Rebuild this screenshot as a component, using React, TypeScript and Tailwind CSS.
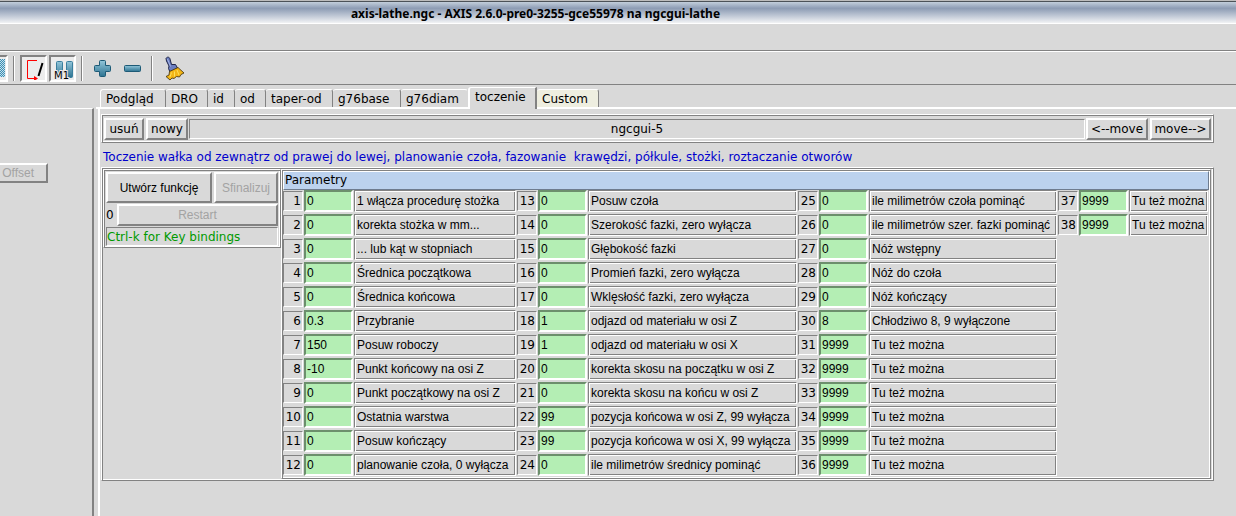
import React from 'react';
import { clsx } from 'clsx';

type Param = { id: number; value: string; label: string };

const columns: Param[][] = [
  [
    { id: 1, value: '0', label: '1 włącza procedurę stożka' },
    { id: 2, value: '0', label: 'korekta stożka w mm...' },
    { id: 3, value: '0', label: '... lub kąt w stopniach' },
    { id: 4, value: '0', label: 'Średnica początkowa' },
    { id: 5, value: '0', label: 'Średnica końcowa' },
    { id: 6, value: '0.3', label: 'Przybranie' },
    { id: 7, value: '150', label: 'Posuw roboczy' },
    { id: 8, value: '-10', label: 'Punkt końcowy na osi Z' },
    { id: 9, value: '0', label: 'Punkt początkowy na osi Z' },
    { id: 10, value: '0', label: 'Ostatnia warstwa' },
    { id: 11, value: '0', label: 'Posuw kończący' },
    { id: 12, value: '0', label: 'planowanie czoła, 0 wyłącza' },
  ],
  [
    { id: 13, value: '0', label: 'Posuw czoła' },
    { id: 14, value: '0', label: 'Szerokość fazki, zero wyłącza' },
    { id: 15, value: '0', label: 'Głębokość fazki' },
    { id: 16, value: '0', label: 'Promień fazki, zero wyłącza' },
    { id: 17, value: '0', label: 'Wklęsłość fazki, zero wyłącza' },
    { id: 18, value: '1', label: 'odjazd od materiału w osi Z' },
    { id: 19, value: '1', label: 'odjazd od materiału w osi X' },
    { id: 20, value: '0', label: 'korekta skosu na początku w osi Z' },
    { id: 21, value: '0', label: 'korekta skosu na końcu w osi Z' },
    { id: 22, value: '99', label: 'pozycja końcowa w osi Z, 99 wyłącza' },
    { id: 23, value: '99', label: 'pozycja końcowa w osi X, 99 wyłącza' },
    { id: 24, value: '0', label: 'ile milimetrów średnicy pominąć' },
  ],
  [
    { id: 25, value: '0', label: 'ile milimetrów czoła pominąć' },
    { id: 26, value: '0', label: 'ile milimetrów szer. fazki pominąć' },
    { id: 27, value: '0', label: 'Nóż wstępny' },
    { id: 28, value: '0', label: 'Nóż do czoła' },
    { id: 29, value: '0', label: 'Nóż kończący' },
    { id: 30, value: '8', label: 'Chłodziwo 8, 9 wyłączone' },
    { id: 31, value: '9999', label: 'Tu też można' },
    { id: 32, value: '9999', label: 'Tu też można' },
    { id: 33, value: '9999', label: 'Tu też można' },
    { id: 34, value: '9999', label: 'Tu też można' },
    { id: 35, value: '9999', label: 'Tu też można' },
    { id: 36, value: '9999', label: 'Tu też można' },
  ],
  [
    { id: 37, value: '9999', label: 'Tu też można' },
    { id: 38, value: '9999', label: 'Tu też można' },
  ],
];

const tabs = [
  { name: 'Podgląd', width: 'w-[66px]' },
  { name: 'DRO', width: 'w-[42px]' },
  { name: 'id', width: 'w-[27px]' },
  { name: 'od', width: 'w-[31px]' },
  { name: 'taper-od', width: 'w-[67px]' },
  { name: 'g76base', width: 'w-[68px]' },
  { name: 'g76diam', width: 'w-[67px]' },
  { name: 'toczenie', width: 'w-[69px]' },
  { name: 'Custom', width: 'w-[62px]' },
];

// Tk style reliefs
const raised = 'border-2 border-t-white border-l-white border-b-[#828282] border-r-[#828282]';
const sunken = 'border-2 border-t-[#828282] border-l-[#828282] border-b-white border-r-white';
const sunkenThin = 'border border-t-[#828282] border-l-[#828282] border-b-white border-r-white';
const ridge =
  'border border-t-white border-l-white border-b-[#828282] border-r-[#828282] shadow-[inset_1px_1px_0_#828282,inset_-1px_-1px_0_#ffffff]';
const groove =
  'border border-t-[#828282] border-l-[#828282] border-b-white border-r-white shadow-[inset_1px_1px_0_#ffffff,inset_-1px_-1px_0_#828282]';
const helvetica = "font-['Liberation_Sans',Arial,sans-serif]";

const Separator: React.FC = () => <div className="h-[25px] w-[2px] border-l border-r border-l-[#828282] border-r-white" />;

const Toolbar: React.FC = () => (
  <div className="flex h-[33px] items-center border-b border-b-[#828282]">
    <button aria-label="Skip lines" className={clsx('h-[27px] w-2 bg-[#ececec]', sunken, 'border-l-0')}>
      <svg width="6" height="18" viewBox="0 0 6 18" className="block">
        <defs>
          <pattern id="dither" width="2" height="2" patternUnits="userSpaceOnUse">
            <rect width="2" height="2" fill="#c4e0ec" />
            <rect width="1" height="1" fill="#3f8fb3" />
            <rect x="1" y="1" width="1" height="1" fill="#3f8fb3" />
          </pattern>
        </defs>
        <rect width="5" height="18" fill="url(#dither)" />
      </svg>
    </button>
    <div className="mx-[5px]">
      <Separator />
    </div>
    <div className="flex gap-[2px]">
      <button aria-label="Optional block skip" className={clsx('h-[27px] w-[27px] bg-[#ececec]', sunken)}>
        <svg width="23" height="23" viewBox="0 0 23 23" className="block">
          <path d="M15 3.5H5.5V21.500H14" fill="none" stroke="#f00" />
          <path d="M12 19v5l4-2.500z" fill="#f00" />
          <path d="M20.500 6L16.500 19" stroke="#000" strokeWidth="2" />
        </svg>
      </button>
      <button aria-label="Optional stop" className={clsx('h-[27px] w-[27px] bg-[#ececec]', sunken)}>
        <svg width="23" height="23" viewBox="0 0 23 23" className="block overflow-visible">
          <defs>
            <linearGradient id="bar" x1="0" y1="0" x2="0" y2="1">
              <stop offset="0" stopColor="#93c6da" />
              <stop offset="1" stopColor="#2d7391" />
            </linearGradient>
          </defs>
          <rect x="5.500" y="4.500" width="6" height="16" rx="1" fill="url(#bar)" stroke="#3a7f9e" />
          <rect x="15.500" y="4.500" width="6" height="16" rx="1" fill="url(#bar)" stroke="#3a7f9e" />
          <text x="3" y="22" fontSize="10" fill="#000" stroke="#ececec" strokeWidth="2" paintOrder="stroke" fontFamily="DejaVu Sans, sans-serif">
            M1
          </text>
        </svg>
      </button>
    </div>
    <div className="ml-[5px]">
      <Separator />
    </div>
    <button aria-label="Zoom in" className="ml-2.5">
      <svg width="19" height="19" viewBox="0 0 19 19" className="block">
        <path
          d="M7.500 1.500h4a1 1 0 0 1 1 1v4h4a1 1 0 0 1 1 1v4a1 1 0 0 1-1 1h-4v4a1 1 0 0 1-1 1h-4a1 1 0 0 1-1-1v-4h-4a1 1 0 0 1-1-1v-4a1 1 0 0 1 1-1h4v-4a1 1 0 0 1 1-1z"
          fill="url(#bar)"
          stroke="#1d5a76"
        />
      </svg>
    </button>
    <button aria-label="Zoom out" className="ml-[11px]">
      <svg width="19" height="19" viewBox="0 0 19 19" className="block">
        <rect x="1.500" y="6.500" width="16" height="6" rx="1" fill="url(#bar)" stroke="#1d5a76" />
      </svg>
    </button>
    <div className="ml-[9px]">
      <Separator />
    </div>
    <button aria-label="Clear plot" className="ml-[11px]">
      <svg width="21" height="25" viewBox="0 0 21 25" className="block">
        <path d="M2 2.500C3 .5 5.500 .8 6 3L7.500 8.500L11.500 8.500L13.500 12L6 16L4.500 12.500L5 10L2.500 5z" fill="#6a7dc0" stroke="#20264a" />
        <path d="M3.500 3L6.500 10.500" stroke="#a5b3e4" />
        <path d="M5.500 15.500L14 11.500L20 17L17 18.500L15.500 21L12.500 20.500L10 22.500L8 22L6 24L2 20.500L5 19z" fill="#f3b515" stroke="#3c2c08" strokeWidth=".8" />
        <path d="M7.500 16.500L6 21M10.500 15.500L10.500 20.500M13 14L15 19" stroke="#fde05a" />
      </svg>
    </button>
  </div>
);

const TabBar: React.FC<{ active: string }> = ({ active }) => (
  <div className="-ml-[2px] flex h-[22px] items-end border-b-2 border-b-white pl-1" role="tablist">
    {tabs.map((tab, i) => {
      const selected = tab.name === active;
      const beforeActive = tabs[i + 1]?.name === active;
      return (
        <button
          key={tab.name}
          role="tab"
          aria-selected={selected}
          className={clsx(
            'shrink-0 border-t border-t-white pl-[5px] text-left whitespace-nowrap',
            tab.width,
            selected
              ? '-mb-[2px] h-[22px] rounded-tl-[3px] border-l-2 border-r-2 border-l-white border-r-[#828282] bg-[#d9d9d9] pb-[3px]'
              : 'h-[18px] rounded-t-[3px] border-r',
            !selected && (beforeActive ? 'border-r-transparent' : 'border-r-[#828282]'),
            i === 0 && 'border-l border-l-white',
            tab.name === 'Custom' && 'bg-[#eeeee0]',
          )}
        >
          {tab.name}
        </button>
      );
    })}
  </div>
);

const ParamRow: React.FC<{ param: Param }> = ({ param }) => {
  const field = `param-${param.id}`;
  return (
    <div className="flex h-[22px]">
      <span className={clsx('mt-px h-5 w-5 shrink-0 pr-px text-right leading-[18px]', sunkenThin)}>{param.id}</span>
      <input
        id={field}
        defaultValue={param.value}
        className={clsx(
          'ml-px h-[22px] w-[49px] shrink-0 border-2 border-t-[#6c8f6c] border-l-[#6c8f6c] border-b-white border-r-white bg-[#b4eeb4] pl-px text-black outline-none',
          helvetica,
        )}
      />
      <label htmlFor={field} className={clsx('ml-px grow pl-[2px] leading-5 whitespace-nowrap', groove, helvetica)}>
        {param.label}
      </label>
    </div>
  );
};

const Controls: React.FC = () => (
  <div className={clsx('h-[79px] w-[178px] shrink-0 p-[2px]', ridge)}>
    <div className={clsx('flex gap-[2px]', helvetica)}>
      <button className={clsx('h-[31px] w-[106px]', raised)}>Utwórz funkcję</button>
      <button disabled className={clsx('h-[31px] grow text-[#a3a3a3]', raised)}>
        Sfinalizuj
      </button>
    </div>
    <div className="mt-px flex items-center">
      <span className="w-[11px]">0</span>
      <button disabled className={clsx('h-[22px] grow text-[#a3a3a3]', raised, helvetica)}>
        Restart
      </button>
    </div>
    <p className={clsx('mt-px h-[19px] leading-[18px] text-[#009900]', sunkenThin)}>Ctrl-k for Key bindings</p>
  </div>
);

const App: React.FC = () => {
  return (
    <div className="flex min-h-screen flex-col overflow-hidden bg-[#d9d9d9] font-['DejaVu_Sans',sans-serif] text-[12px] leading-4 text-black">
      {/* Window title */}
      <header className="h-6 border-t border-b border-t-[#bdbdbd] border-b-white">
        <h1 className="h-[22px] border-t border-t-[#4c5258] bg-linear-to-b from-[#c3cfdc] via-[#8d9cb4] via-30% to-[#f2f3f5] pr-[165px] text-center font-['Noto_Sans',sans-serif] text-[12px] leading-6 font-bold">
          axis-lathe.ngc - AXIS 2.6.0-pre0-3255-gce55978 na ngcgui-lathe
        </h1>
      </header>

      {/* Menu strip */}
      <div className="h-[28px] border-b border-b-white">
        <div className="h-[27px] border-b border-b-[#828282]" />
      </div>

      <Toolbar />

      <div className="flex grow">
        {/* Left pane */}
        <aside className="mt-[23px] w-[94px] shrink-0 border-t border-r-2 border-t-white border-r-[#828282] pt-[54px]">
          <button disabled className={clsx('h-5 w-12 pr-3 text-right text-[#a3a3a3]', raised, 'border-l-0', helvetica)}>
            Offset
          </button>
        </aside>

        {/* Notebook */}
        <main className="ml-1 flex min-w-0 grow flex-col pt-[2px]">
          <TabBar active="toczenie" />
          <section className="grow border-l-2 border-l-white pt-[5px] pr-[22px] pl-px">
            <div className={clsx('flex h-[29px] items-center gap-px px-[2px]', ridge)}>
              <div className="flex gap-[2px]">
                <button className={clsx('h-[22px] w-10', raised)}>usuń</button>
                <button className={clsx('h-[22px] w-[42px]', raised)}>nowy</button>
              </div>
              <div className={clsx('h-5 grow text-center leading-[18px]', sunkenThin)}>ngcgui-5</div>
              <div className="flex gap-[2px]">
                <button className={clsx('h-[22px] w-[62px]', raised)}>&lt;--move</button>
                <button className={clsx('h-[22px] w-[61px]', raised)}>move--&gt;</button>
              </div>
            </div>

            <p className="h-6 pl-[2px] leading-7 whitespace-pre text-[#0000cd]">
              {'Toczenie wałka od zewnątrz od prawej do lewej, planowanie czoła, fazowanie  krawędzi, półkule, stożki, roztaczanie otworów'}
            </p>

            <div className={clsx('flex items-start py-px pr-[2px] pl-px', ridge)}>
              <Controls />
              <div className={clsx('grow px-px pt-px pb-[2px]', ridge)}>
                <h2 className="h-[19px] border border-t-white border-l-white border-r-[#6f7c8f] border-b-[#6f7c8f] bg-[#bcd2ee] pl-px leading-[17px]">
                  Parametry
                </h2>
                <div className="grid grid-cols-[234fr_281fr_260fr_151fr]">
                  {columns.map((params) => (
                    <div key={params[0].id} className="flex flex-col gap-[2px] pr-px">
                      {params.map((param) => (
                        <ParamRow key={param.id} param={param} />
                      ))}
                    </div>
                  ))}
                </div>
              </div>
            </div>
          </section>
        </main>
      </div>
    </div>
  );
};

export default App;
